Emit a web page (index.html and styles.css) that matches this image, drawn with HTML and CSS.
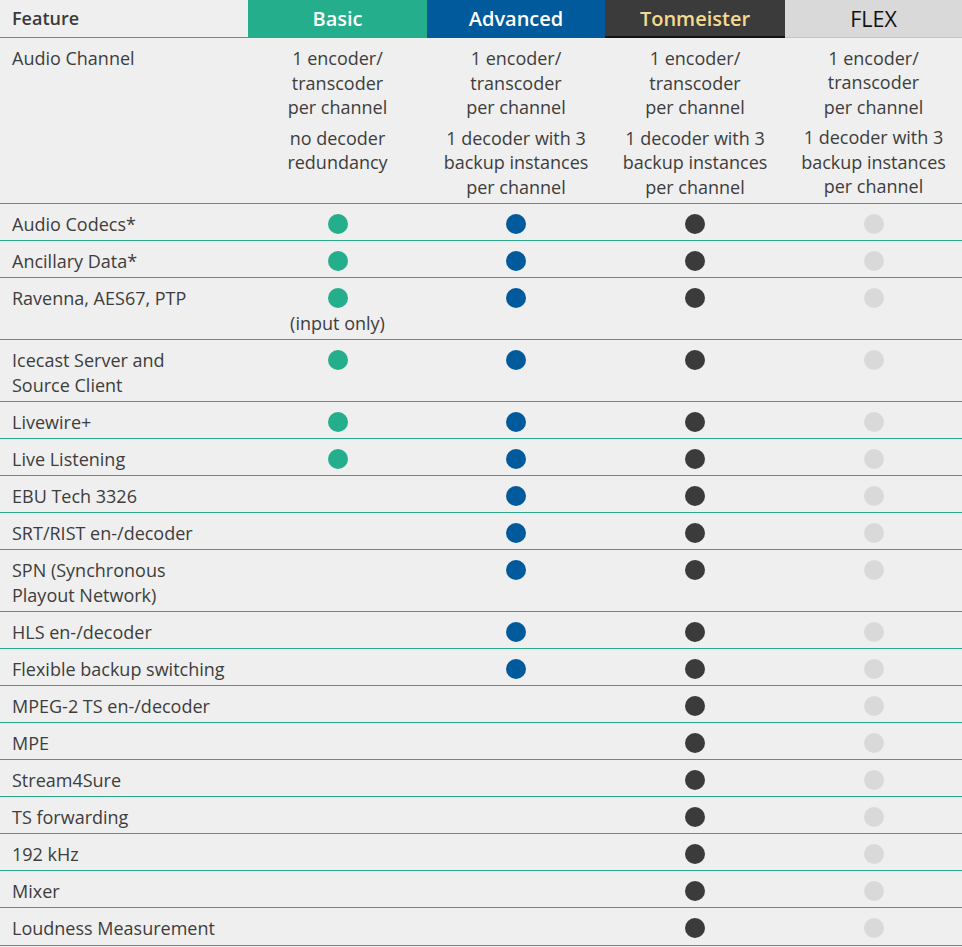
FILE: index.html
```html
<!DOCTYPE html>
<html lang="en">
<head>
<meta charset="utf-8">
<title>Feature comparison</title>
<link rel="stylesheet" href="styles.css">
</head>
<body>
<table class="cmp">
  <colgroup>
    <col class="c-feat"><col class="c-basic"><col class="c-adv"><col class="c-ton"><col class="c-flex">
  </colgroup>
  <thead>
    <tr>
      <th class="h-feat">Feature</th>
      <th class="h-basic">Basic</th>
      <th class="h-adv">Advanced</th>
      <th class="h-ton">Tonmeister</th>
      <th class="h-flex">FLEX</th>
    </tr>
  </thead>
  <tbody>
    <tr>
      <td>Audio Channel</td>
      <td class="v"><p>1 encoder/<br>transcoder<br>per channel</p><p>no decoder<br>redundancy</p></td>
      <td class="v"><p>1 encoder/<br>transcoder<br>per channel</p><p>1 decoder with 3<br>backup instances<br>per channel</p></td>
      <td class="v"><p>1 encoder/<br>transcoder<br>per channel</p><p>1 decoder with 3<br>backup instances<br>per channel</p></td>
      <td class="v"><p>1 encoder/<br>transcoder<br>per channel</p><p>1 decoder with 3<br>backup instances<br>per channel</p></td>
    </tr>
    <tr><td>Audio Codecs*</td><td class="v"><span class="dot g"></span></td><td class="v"><span class="dot b"></span></td><td class="v"><span class="dot k"></span></td><td class="v"><span class="dot l"></span></td></tr>
    <tr><td>Ancillary Data*</td><td class="v"><span class="dot g"></span></td><td class="v"><span class="dot b"></span></td><td class="v"><span class="dot k"></span></td><td class="v"><span class="dot l"></span></td></tr>
    <tr><td>Ravenna, AES67, PTP</td><td class="v"><span class="dot g"></span><br>(input only)</td><td class="v"><span class="dot b"></span></td><td class="v"><span class="dot k"></span></td><td class="v"><span class="dot l"></span></td></tr>
    <tr><td>Icecast Server and<br>Source Client</td><td class="v"><span class="dot g"></span></td><td class="v"><span class="dot b"></span></td><td class="v"><span class="dot k"></span></td><td class="v"><span class="dot l"></span></td></tr>
    <tr><td>Livewire+</td><td class="v"><span class="dot g"></span></td><td class="v"><span class="dot b"></span></td><td class="v"><span class="dot k"></span></td><td class="v"><span class="dot l"></span></td></tr>
    <tr><td>Live Listening</td><td class="v"><span class="dot g"></span></td><td class="v"><span class="dot b"></span></td><td class="v"><span class="dot k"></span></td><td class="v"><span class="dot l"></span></td></tr>
    <tr><td>EBU Tech 3326</td><td class="v"></td><td class="v"><span class="dot b"></span></td><td class="v"><span class="dot k"></span></td><td class="v"><span class="dot l"></span></td></tr>
    <tr><td>SRT/RIST en-/decoder</td><td class="v"></td><td class="v"><span class="dot b"></span></td><td class="v"><span class="dot k"></span></td><td class="v"><span class="dot l"></span></td></tr>
    <tr><td>SPN (Synchronous<br>Playout Network)</td><td class="v"></td><td class="v"><span class="dot b"></span></td><td class="v"><span class="dot k"></span></td><td class="v"><span class="dot l"></span></td></tr>
    <tr><td>HLS en-/decoder</td><td class="v"></td><td class="v"><span class="dot b"></span></td><td class="v"><span class="dot k"></span></td><td class="v"><span class="dot l"></span></td></tr>
    <tr><td>Flexible backup switching</td><td class="v"></td><td class="v"><span class="dot b"></span></td><td class="v"><span class="dot k"></span></td><td class="v"><span class="dot l"></span></td></tr>
    <tr><td>MPEG-2 TS en-/decoder</td><td class="v"></td><td class="v"></td><td class="v"><span class="dot k"></span></td><td class="v"><span class="dot l"></span></td></tr>
    <tr><td>MPE</td><td class="v"></td><td class="v"></td><td class="v"><span class="dot k"></span></td><td class="v"><span class="dot l"></span></td></tr>
    <tr><td>Stream4Sure</td><td class="v"></td><td class="v"></td><td class="v"><span class="dot k"></span></td><td class="v"><span class="dot l"></span></td></tr>
    <tr><td>TS forwarding</td><td class="v"></td><td class="v"></td><td class="v"><span class="dot k"></span></td><td class="v"><span class="dot l"></span></td></tr>
    <tr><td>192 kHz</td><td class="v"></td><td class="v"></td><td class="v"><span class="dot k"></span></td><td class="v"><span class="dot l"></span></td></tr>
    <tr><td>Mixer</td><td class="v"></td><td class="v"></td><td class="v"><span class="dot k"></span></td><td class="v"><span class="dot l"></span></td></tr>
    <tr><td>Loudness Measurement</td><td class="v"></td><td class="v"></td><td class="v"><span class="dot k"></span></td><td class="v"><span class="dot l"></span></td></tr>
  </tbody>
</table>
</body>
</html>
```

FILE: styles.css
```css
html, body {
  margin: 0;
  padding: 0;
  background: #efefef;
}
body {
  font-family: "Open Sans", "Noto Sans", sans-serif;
  color: #3d3d3d;
  font-size: 18px;
}
.cmp {
  width: 962px;
  border-collapse: collapse;
  table-layout: fixed;
}
.c-feat { width: 248px; }
.c-basic { width: 179px; }
.c-adv { width: 178px; }
.c-ton { width: 180px; }
.c-flex { width: 177px; }

.cmp th {
  height: 36px;
  padding: 0;
  font-size: 20px;
  font-weight: 600;
  text-align: center;
  vertical-align: middle;
  border-bottom: 2px solid #25ae8b;
}
.cmp th.h-feat {
  text-align: left;
  padding-left: 12px;
  font-size: 18px;
  font-weight: 600;
  color: #3a3a3a;
  border-bottom: 1px solid #25ae8b;
}
.h-basic { background: #24ae8b; color: #fff; border-bottom-color: #24ae8b !important; }
.h-adv { background: #005a9b; color: #fff; border-bottom-color: #005a9b !important; }
.h-ton { background: #3b3b3b; color: #f4da91; border-bottom-color: #111 !important; }
.h-flex { background: #d9d9d9; color: #111; font-weight: 400 !important; font-size: 21.5px !important; border-bottom: 1px solid #c4c4c4 !important; }

.cmp td {
  padding: 8px 0 3.5px 12px;
  line-height: 24.6px;
  vertical-align: top;
  border-bottom: 1px solid #2aa98a;
}
.cmp td.v {
  padding-left: 0;
  text-align: center;
}
.cmp td p {
  margin: 0;
}
.cmp td p + p {
  margin-top: 6px;
}
.dot {
  display: inline-block;
  width: 20px;
  height: 20px;
  border-radius: 50%;
  vertical-align: -3px;
}
.dot.g { background: #24ae8b; }
.dot.b { background: #005a9b; }
.dot.k { background: #3b3b3b; }
.dot.l { background: #d9d9d9; }
```
